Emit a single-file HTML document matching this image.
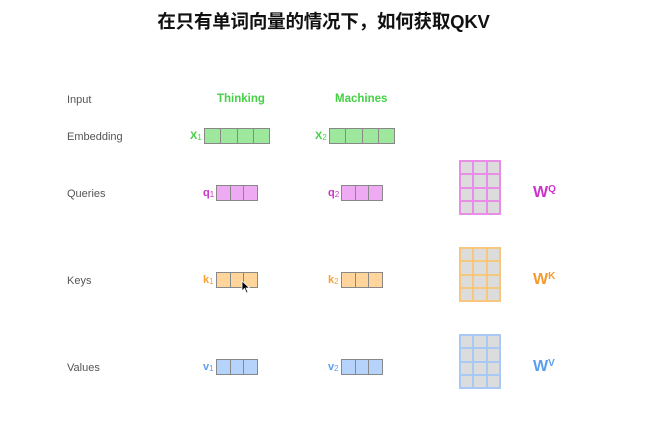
<!DOCTYPE html>
<html><head><meta charset="utf-8"><style>
body{margin:0;width:647px;height:433px;background:#fff;position:relative;overflow:hidden;font-family:"Liberation Sans","Noto Sans CJK SC",sans-serif}
.a{position:absolute}
.t{left:0;width:647px;top:8px;text-align:center;font-size:18.5px;font-weight:bold;color:#111;font-family:"Liberation Sans","Noto Sans CJK SC",sans-serif;letter-spacing:-0.2px}
.lab{font-size:11px;color:#555;left:67px}
.row{display:flex;border:1px solid #888;box-sizing:border-box;height:16px}
.row div{flex:1;border-right:1px solid #888}
.row div:last-child{border-right:none}
.sym{font-size:11px;font-weight:bold}
.sym sub{font-size:8px;font-weight:normal;vertical-align:-1px}
.m{display:grid;grid-template-columns:repeat(3,1fr);grid-template-rows:repeat(4,1fr);width:42px;height:55px;box-sizing:border-box;border:2px solid;gap:2px}
.m div{background:#dcdcdc}
.w{font-size:16px;font-weight:bold}
.w sup{font-size:10px;vertical-align:5px}
</style></head><body>
<div class="a t">在只有单词向量的情况下，如何获取QKV</div>
<div class="a lab" style="top:94px">Input</div>
<div class="a lab" style="top:131px">Embedding</div>
<div class="a lab" style="top:188px">Queries</div>
<div class="a lab" style="top:275px">Keys</div>
<div class="a lab" style="top:362px">Values</div>
<div class="a" style="left:217px;top:93px;font-size:11.5px;font-weight:bold;color:#44d144">Thinking</div>
<div class="a" style="left:335px;top:93px;font-size:11.5px;font-weight:bold;color:#44d144">Machines</div>

<div class="a sym" style="left:190px;top:130px;color:#44d144">X<sub>1</sub></div>
<div class="a row" style="left:204px;top:128px;width:66px;background:#9ee89e"><div></div><div></div><div></div><div></div></div>
<div class="a sym" style="left:315px;top:130px;color:#44d144">X<sub>2</sub></div>
<div class="a row" style="left:329px;top:128px;width:66px;background:#9ee89e"><div></div><div></div><div></div><div></div></div>

<div class="a sym" style="left:203px;top:187px;color:#cc33cc">q<sub>1</sub></div>
<div class="a row" style="left:216px;top:185px;width:42px;background:#eeaaf2"><div></div><div></div><div></div></div>
<div class="a sym" style="left:328px;top:187px;color:#cc33cc">q<sub>2</sub></div>
<div class="a row" style="left:341px;top:185px;width:42px;background:#eeaaf2"><div></div><div></div><div></div></div>

<div class="a sym" style="left:203px;top:274px;color:#f5a030">k<sub>1</sub></div>
<div class="a row" style="left:216px;top:272px;width:42px;background:#ffd59c"><div></div><div></div><div></div></div>
<div class="a sym" style="left:328px;top:274px;color:#f5a030">k<sub>2</sub></div>
<div class="a row" style="left:341px;top:272px;width:42px;background:#ffd59c"><div></div><div></div><div></div></div>

<div class="a sym" style="left:203px;top:361px;color:#5b9ef0">v<sub>1</sub></div>
<div class="a row" style="left:216px;top:359px;width:42px;background:#b5d3fb"><div></div><div></div><div></div></div>
<div class="a sym" style="left:328px;top:361px;color:#5b9ef0">v<sub>2</sub></div>
<div class="a row" style="left:341px;top:359px;width:42px;background:#b5d3fb"><div></div><div></div><div></div></div>

<div class="a m" style="left:459px;top:160px;border-color:#e88ee8;background:#e88ee8"><div></div><div></div><div></div><div></div><div></div><div></div><div></div><div></div><div></div><div></div><div></div><div></div></div>
<div class="a m" style="left:459px;top:247px;border-color:#f8c77e;background:#f8c77e"><div></div><div></div><div></div><div></div><div></div><div></div><div></div><div></div><div></div><div></div><div></div><div></div></div>
<div class="a m" style="left:459px;top:334px;border-color:#a8c8f5;background:#a8c8f5"><div></div><div></div><div></div><div></div><div></div><div></div><div></div><div></div><div></div><div></div><div></div><div></div></div>

<div class="a w" style="left:533px;top:184px;color:#cc33cc">W<sup>Q</sup></div>
<div class="a w" style="left:533px;top:271px;color:#f59a30">W<sup>K</sup></div>
<div class="a w" style="left:533px;top:358px;color:#5b9ef0">W<sup>V</sup></div>

<svg class="a" style="left:241px;top:280px" width="10" height="14" viewBox="0 0 10 14"><path d="M1 1 L1 11 L3.5 8.5 L5.5 13 L7 12.3 L5 8 L8.5 8 Z" fill="#000" stroke="#fff" stroke-width="0.8"/></svg>
</body></html>
